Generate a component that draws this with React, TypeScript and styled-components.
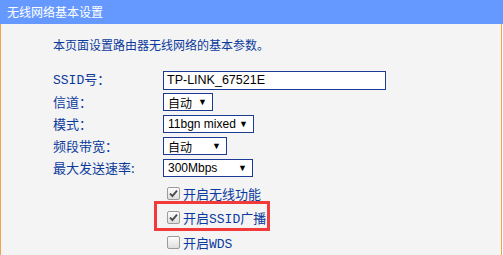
import { Fragment } from "react";
import styled, { createGlobalStyle } from "styled-components";

const GlobalStyle = createGlobalStyle`
  body {
    margin: 0;
    background: #ffffff;
    font-family: "Noto Sans CJK SC", "Liberation Sans", sans-serif;
  }
`

const Page = styled.div`
  width: 503px;
  height: 255px;
  overflow: hidden;
`
const Header = styled.div`
  height: 24px;
  background: #6699ff;
  color: #ffffff;
  font-size: 12px;
  line-height: 24px;
  padding-left: 7px;
`
const Body = styled.div`
  width: 502px;
  height: 231px;
  box-sizing: border-box;
  background: #f4f4f4;
  border-left: 1px solid #f5a04a;
  border-right: 1px solid #f5a04a;
  padding: 12px 0 0 52px;
`
const Intro = styled.div`
  color: #0b3a9c;
  font-size: 12px;
  line-height: 18px;
`
const Form = styled.div`
  display: grid;
  grid-template-columns: 110px auto;
  grid-auto-rows: 22px;
  align-items: center;
  margin-top: 15px;
`
const Label = styled.div`
  color: #0b3a9c;
  font-size: 13px;
  line-height: 16px;
`
const Mono = styled.span`
  font-family: "Liberation Mono", monospace;
`
const TextField = styled.div`
  width: 223px;
  height: 19px;
  box-sizing: border-box;
  border: 1px solid #1d3a96;
  background: #ffffff;
  padding-left: 3px;
  font-family: "Liberation Sans", Arial, sans-serif;
  font-size: 12.5px;
  line-height: 17px;
  color: #000000;
`
const Select = styled.div<{ $width: number }>`
  width: ${(p) => p.$width}px;
  height: 18px;
  box-sizing: border-box;
  border: 1px solid #1d3a96;
  background: #ffffff;
  display: flex;
  align-items: center;
  justify-content: space-between;
  padding: 0 5px 0 4px;
  font-family: "Liberation Sans", Arial, "Noto Sans CJK SC", sans-serif;
  font-size: 12px;
  color: #000000;
  white-space: nowrap;
`
const Arrow = styled.span`
  font-size: 9px;
  line-height: 1;
  color: #000000;
`
const Checks = styled.div`
  display: flex;
  flex-direction: column;
  margin: 5px 0 0 101px;
`
const CheckRow = styled.div`
  display: flex;
  align-items: center;
  gap: 3px;
  height: 18px;
  padding-left: 13px;
  color: #0b3a9c;
  font-size: 13px;
`
const Highlight = styled(CheckRow)`
  width: 116px;
  height: 30px;
  box-sizing: border-box;
  border: 3px solid #f23a3a;
  padding: 3px 0 0 10px;
  margin: -1px 0 2px;
`
const Box = styled.span`
  width: 13px;
  height: 13px;
  box-sizing: border-box;
  border: 1px solid #9b9b9b;
  border-radius: 2px;
  background: linear-gradient(#fdfdfd, #dedede);
  display: flex;
  align-items: center;
  justify-content: center;
`

const Check = ({ on }: { on: boolean }) => (
  <Box>
    {on && (
      <svg width="9" height="9" viewBox="0 0 9 9">
        <path d="M1 4.6 L3.4 7 L8 1.6" fill="none" stroke="#4a4a4a" strokeWidth="1.9" />
      </svg>
    )}
  </Box>
)

const fields = [
  { label: "信道：", value: "自动", width: 50 },
  { label: "模式：", value: "11bgn mixed", width: 91 },
  { label: "频段带宽：", value: "自动", width: 64 },
  { label: "最大发送速率:", value: "300Mbps", width: 90 },
]

export default function App() {
  return (
    <Page>
      <GlobalStyle />
      <Header>无线网络基本设置</Header>
      <Body>
        <Intro>本页面设置路由器无线网络的基本参数。</Intro>
        <Form>
          <Label><Mono>SSID</Mono>号：</Label>
          <TextField>TP-LINK_67521E</TextField>
          {fields.map((f) => (
            <Fragment key={f.label}>
              <Label>{f.label}</Label>
              <Select $width={f.width}>
                <span>{f.value}</span>
                <Arrow>▼</Arrow>
              </Select>
            </Fragment>
          ))}
        </Form>
        <Checks>
          <CheckRow>
            <Check on />
            开启无线功能
          </CheckRow>
          <Highlight>
            <Check on />
            <span>开启<Mono>SSID</Mono>广播</span>
          </Highlight>
          <CheckRow>
            <Check on={false} />
            <span>开启<Mono>WDS</Mono></span>
          </CheckRow>
        </Checks>
      </Body>
    </Page>
  )
}
